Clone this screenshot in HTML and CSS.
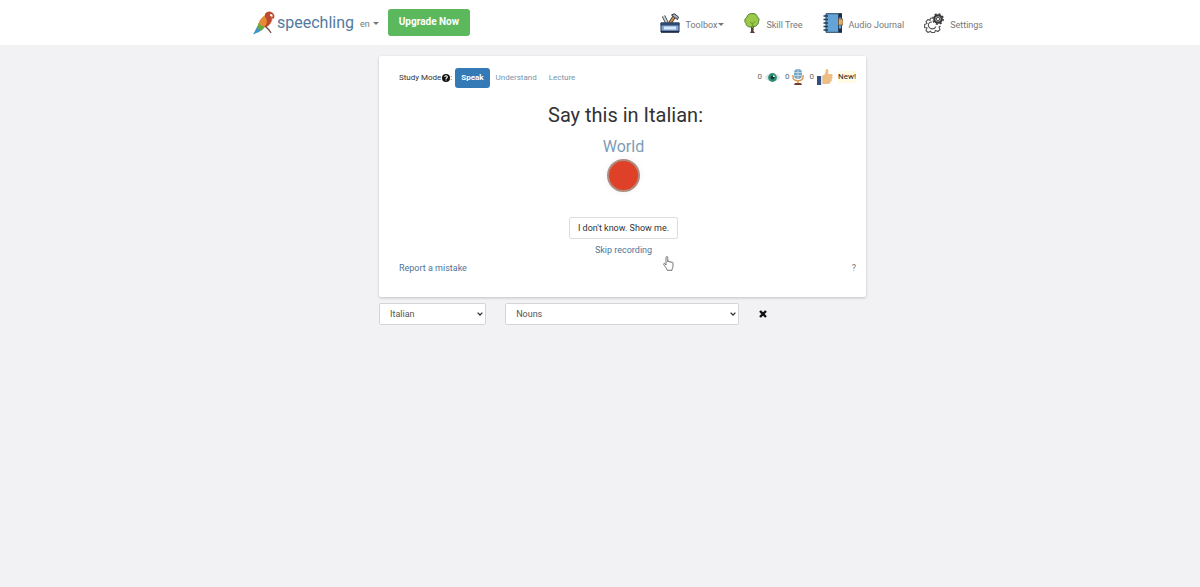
FILE: index.html
```
<!DOCTYPE html>
<html lang="en">
<head>
<meta charset="utf-8">
<meta name="viewport" content="width=device-width, initial-scale=1">
<title>Speechling</title>
<link rel="stylesheet" href="styles.css">
</head>
<body>
<header class="navbar">
  <nav class="navbar-inner">
    <a class="brand" href="#">
      <svg class="brand-logo" viewBox="0 0 22 24" aria-hidden="true">
        <path d="M7 13 4 16 0 23.500 6 21 11 17Z" fill="#3d94cd"/>
        <path d="M5.500 12 4 17 8 20 13 15Z" fill="#64a844"/>
        <path d="M14 3C10 5 6 9 5.500 13l6 3c5-1 8-5 8-9z" fill="#e58a35"/>
        <path d="M12 3c1-2 4-3 6-2 3 1 4 4 3 6l-1 1-1.500-2c.5 4-1.500 8-5 10l-1-1c2-4 2-6-.5-9z" fill="#bd4930"/>
        <path d="M17 3l2.500.5V6L17 5z" fill="#fff0d8"/>
        <path d="M12 15l4 4 2 3" fill="none" stroke="#70463b" stroke-width="1.300"/>
      </svg>
      <span>speechling</span>
    </a>
    <button class="menu-button lang" type="button">en <i class="caret"></i></button>
    <button class="upgrade" type="button">Upgrade Now</button>
    <ul class="nav-links">
      <li><button class="menu-button nav-item" type="button">
        <svg class="nav-icon" viewBox="0 0 20 20" aria-hidden="true">
          <path d="M7 10 3.500 3M10 10l4-6" fill="none" stroke="#333b45" stroke-width="3.600"/>
          <path d="M7 10 3.500 3" stroke="#c9d1d5" stroke-width="2"/>
          <path d="M10 10l4-6" stroke="#dc8a3d" stroke-width="2"/>
          <path d="M11.500 2l3-1.200 4 3.200-1 2.500-3-2z" fill="#a7b0b5" stroke="#303843"/>
          <path d="M1 10h18v9H1z" fill="#7fa8dc" stroke="#24334d"/>
          <path d="M.5 9.500h19v3H.5z" fill="#31496d"/>
          <path d="M4 13.500h12v3H4z" fill="#d8e9fb"/>
          <path d="M1 18.700h18" stroke="#202c43" stroke-width="2"/>
        </svg>
        <span>Toolbox</span><i class="caret"></i></button></li>
      <li><a class="nav-item" href="#">
        <svg class="nav-icon tree" viewBox="0 0 16 20" aria-hidden="true">
          <path d="M7 11h3l-.5 7 1.500 2H6l1-2z" fill="#5b4032"/>
          <path d="M8 .7c3-.7 5 1 5 3 2 1 2.500 3 1.500 5 0 3-3 5.500-5.500 4.500C6 15 2 13.500 2 10.500 0 8.500.8 5 3 4.200 3 2 5.500.3 8 .7z" fill="#9bc94a" stroke="#53782b"/>
          <path d="M8.500 10v5M6 9l2.500 2L11 8" fill="none" stroke="#6f9a2c"/>
        </svg>
        <span>Skill Tree</span></a></li>
      <li><a class="nav-item" href="#">
        <svg class="nav-icon" viewBox="0 0 20 20" aria-hidden="true">
          <path d="M3 .7h15.500v18.600H3z" fill="#64a3d6" stroke="#294765"/>
          <path d="M15.500 1v18" stroke="#294765"/>
          <path d="M16 .5h3v4h-3zM16 15.500h3v4h-3z" fill="#222e3c"/>
          <path d="M15.500 6H20v6h-4.500z" fill="#e1ad66" stroke="#735238" stroke-width=".7"/>
          <path d="M.5 3H5M.5 6.500H5M.5 10H5M.5 13.500H5M.5 17H5" stroke="#263a52" stroke-width="1.400"/>
        </svg>
        <span>Audio Journal</span></a></li>
      <li><a class="nav-item" href="#">
        <svg class="nav-icon" viewBox="0 0 20 20" aria-hidden="true">
          <g fill="none" stroke="#555" stroke-width="1.100">
            <path d="M8.500 5 6.500 5.200 6 7.500 4 6.500 2 8.500l1 2-2.400 1v3l2.400.5-1 2.500 2 2 2.500-1.200 1 1.200h3l1-2 2.500 1 2-2-1-2.500 1.500-1"/>
            <path d="M8 9C5 9 4 11 4.500 13c.7 3.500 6 4 7.500.5"/>
          </g>
          <circle cx="14" cy="6" r="3.800" fill="#aaa" stroke="#383838" stroke-width="2"/>
          <circle cx="14" cy="6" r="5.200" fill="none" stroke="#383838" stroke-width="1.400" stroke-dasharray="2 2.080"/>
          <circle cx="14" cy="6" r="1.600" fill="#fff" stroke="#555"/>
        </svg>
        <span>Settings</span></a></li>
    </ul>
  </nav>
</header>

<main class="page">
  <div class="study">
    <section class="card">
      <div class="card-top">
        <div class="modes">
          <span class="modes-label">Study Mode<svg class="help-icon" viewBox="0 0 8 8" aria-hidden="true"><circle cx="4" cy="4" r="4" fill="#111"/><path d="M2.700 3.100C2.700 1.400 5.300 1.400 5.300 3 5.300 4 4 3.900 4 5M4 5.600v1" fill="none" stroke="#fff" stroke-width="1.100"/></svg>:</span>
          <button class="mode active" type="button">Speak</button>
          <button class="mode" type="button">Understand</button>
          <button class="mode" type="button">Lecture</button>
        </div>
        <div class="stats">
          <span class="stat">0
            <svg class="eye" viewBox="0 0 16 12" role="img" aria-label="Listened"><path d="M0 6C1 0 15 0 16 6 15 12 1 12 0 6z" fill="#dfe7e6"/><circle cx="8" cy="6" r="4.800" fill="#2f8c76"/><circle cx="8" cy="6" r="2.200" fill="#123f3b"/><circle cx="9.500" cy="4.500" r="1" fill="#fff"/></svg></span>
          <span class="stat">0
            <svg class="mic" viewBox="0 0 12 16" role="img" aria-label="Recorded"><path d="M1 6v2c0 5 10 5 10 0V6M6 12v3" fill="none" stroke="#d99a4e" stroke-width="1.400"/><rect x="2" y="0" width="8" height="10" rx="4" fill="#73a6c8"/><path d="M6 0v10M2 3.500h8M2 6.500h8" stroke="#d2e1e9" stroke-width=".8"/><path d="M3 14h6l1 2H2z" fill="#703d2f"/></svg></span>
          <span class="stat">0
            <svg class="thumb" viewBox="0 0 16 16" role="img" aria-label="Approved"><path d="M5 7 8 5l1-5c2.500 0 3 2 2 5h3c2 0 2 2 1 2.500 1 1 .5 2.500-.5 2.500 1 1 0 2.500-1 2.500 0 1.500-1 2.500-2 2.500L5 15z" fill="#efbd82"/><path d="M0 7h4v9H0z" fill="#315080"/><path d="M4 7h1.500v8.500H4z" fill="#dce6ee"/></svg></span>
          <mark class="new">New!</mark>
        </div>
      </div>
      <h1 class="prompt">Say this in Italian:</h1>
      <p class="word">World</p>
      <button class="record" type="button" aria-label="Record"></button>
      <button class="show" type="button">I don't know. Show me.</button>
      <a class="skip" href="#">Skip recording</a>
      <div class="card-bottom">
        <a href="#">Report a mistake</a>
        <button class="question" type="button">?</button>
      </div>
      <svg class="pointer" viewBox="0 0 11 15" aria-hidden="true"><path d="M3 9V1.500c0-1.300 1.800-1.300 1.800 0V6c0-1 1.700-1 1.700.2 0-.9 1.700-.8 1.700.4 0-.9 1.800-.7 1.800.5V10c0 2-1 2.500-1 4.300H4.200C4 12 1.500 10.500.7 8.300c-.3-1 .9-1.300 1.400-.5z" fill="#fff" stroke="#555" stroke-width=".8"/></svg>
    </section>
    <form class="filters">
      <div class="field language">
        <select class="select" aria-label="Language"><option>Italian</option></select>
        <svg class="chevron" viewBox="0 0 6 4" aria-hidden="true"><path d="M.6.6 3 3 5.400.6" fill="none" stroke="#333" stroke-width="1.300"/></svg>
      </div>
      <div class="field category">
        <select class="select" aria-label="Category"><option>Nouns</option></select>
        <svg class="chevron" viewBox="0 0 6 4" aria-hidden="true"><path d="M.6.6 3 3 5.400.6" fill="none" stroke="#333" stroke-width="1.300"/></svg>
      </div>
      <button class="clear" type="button" aria-label="Clear"><svg class="clear-icon" viewBox="0 0 8 8" aria-hidden="true"><path d="M1 1l6 6M7 1 1 7" stroke="#111" stroke-width="2.400"/></svg></button>
    </form>
  </div>
</main>
</body>
</html>
```
FILE: styles.css
```
* { box-sizing: border-box; }

body {
  margin: 0;
  background: #f2f2f5;
  color: #333;
  font: 9px/12px Roboto, "Liberation Sans", sans-serif;
}

button { padding: 0; border: 0; background: none; font: inherit; color: inherit; }
a { color: #4f7599; text-decoration: none; }
svg { display: block; flex: none; }

.navbar { padding: 0 16px 0 52px; background: #fff; }
.navbar-inner {
  display: flex;
  align-items: center;
  max-width: 730px;
  min-height: 45px;
  margin: 0 auto;
}
.brand { display: flex; align-items: center; gap: 2px; font-size: 16px; line-height: 24px; color: #53799d; }
.brand-logo { width: 22px; height: 24px; }
.menu-button { display: flex; align-items: center; gap: 3px; color: #777; }
.lang { margin-left: 6px; padding-top: 2px; }
.caret { border: 3px solid transparent; border-top-color: currentColor; border-bottom: 0; }
.upgrade {
  margin-left: 9px;
  padding: 7px 11px 8px;
  border-radius: 3px;
  background: #5cb85c;
  color: #fff;
  font-size: 10px;
  font-weight: 700;
}
.nav-links { display: flex; gap: 20px; margin: 0 0 0 auto; padding: 0; list-style: none; }
.nav-item { display: flex; align-items: center; gap: 6px; color: #777; }
.nav-item span { padding-top: 4px; }
.nav-item .caret { margin: 4px 0 0 -5px; }
.nav-icon { width: 20px; height: 20px; }
.tree { width: 16px; }

.page { padding: 11px 0 20px 45px; }
.study { max-width: 487px; margin: 0 auto; }
.card {
  position: relative;
  display: flex;
  flex-direction: column;
  align-items: center;
  padding: 12px 10px 23px 12px;
  border-radius: 2px;
  background: #fff;
  box-shadow: 0 1px 3px #0003;
}
.card-top, .card-bottom { display: flex; justify-content: space-between; align-self: stretch; padding-left: 8px; }
.modes, .stats, .stat { display: flex; align-items: center; }
.modes-label { display: flex; align-items: center; margin-right: 3px; font-size: 8px; }
.help-icon { width: 8px; height: 8px; margin-left: 1px; }
.mode { padding: 4px 6px; border-radius: 3px; color: #7594ad; font-size: 8px; }
.mode.active { background: #337ab7; color: #fff; font-weight: 700; }
.stats { gap: 5px; padding-bottom: 2px; font-size: 8px; color: #666; }
.stat { gap: 3px; }
.eye { width: 15px; height: 11px; }
.mic { width: 12px; height: 16px; }
.thumb { width: 16px; height: 16px; }
.new { background: #fffbe3; color: #222; }
.prompt { margin: 15px 0 0; padding-left: 4px; font-size: 20px; font-weight: 400; line-height: 24px; }
.word { margin: 10px 0 0; color: #7c9cb6; font-size: 16px; line-height: 20px; }
.record {
  width: 33px;
  height: 33px;
  margin-top: 2px;
  border: 2px solid #b08c80;
  border-radius: 50%;
  background: #df4128;
  box-shadow: 0 0 6px #0001;
}
.show { margin-top: 25px; padding: 4px 8px; border: 1px solid #ddd; border-radius: 2px; }
.skip { margin-top: 5px; }
.card-bottom { margin-top: 6px; }
.question { color: #777; }
.pointer { position: absolute; top: 200px; left: 284px; width: 11px; height: 15px; }

.filters { display: flex; align-items: center; margin-top: 6px; }
.field { display: grid; align-items: center; }
.field > * { grid-area: 1 / 1; }
.select {
  appearance: none;
  width: 100%;
  height: 22px;
  padding: 0 16px 0 10px;
  border: 1px solid #d5d5d9;
  border-radius: 2px;
  background: #fff;
  color: #555;
  font: inherit;
}
.chevron { width: 6px; height: 4px; margin-right: 3px; justify-self: end; pointer-events: none; }
.language { width: 22%; margin-right: 19px; }
.category { width: 48%; margin-right: 20px; }
.clear-icon { width: 8px; height: 8px; }
```
